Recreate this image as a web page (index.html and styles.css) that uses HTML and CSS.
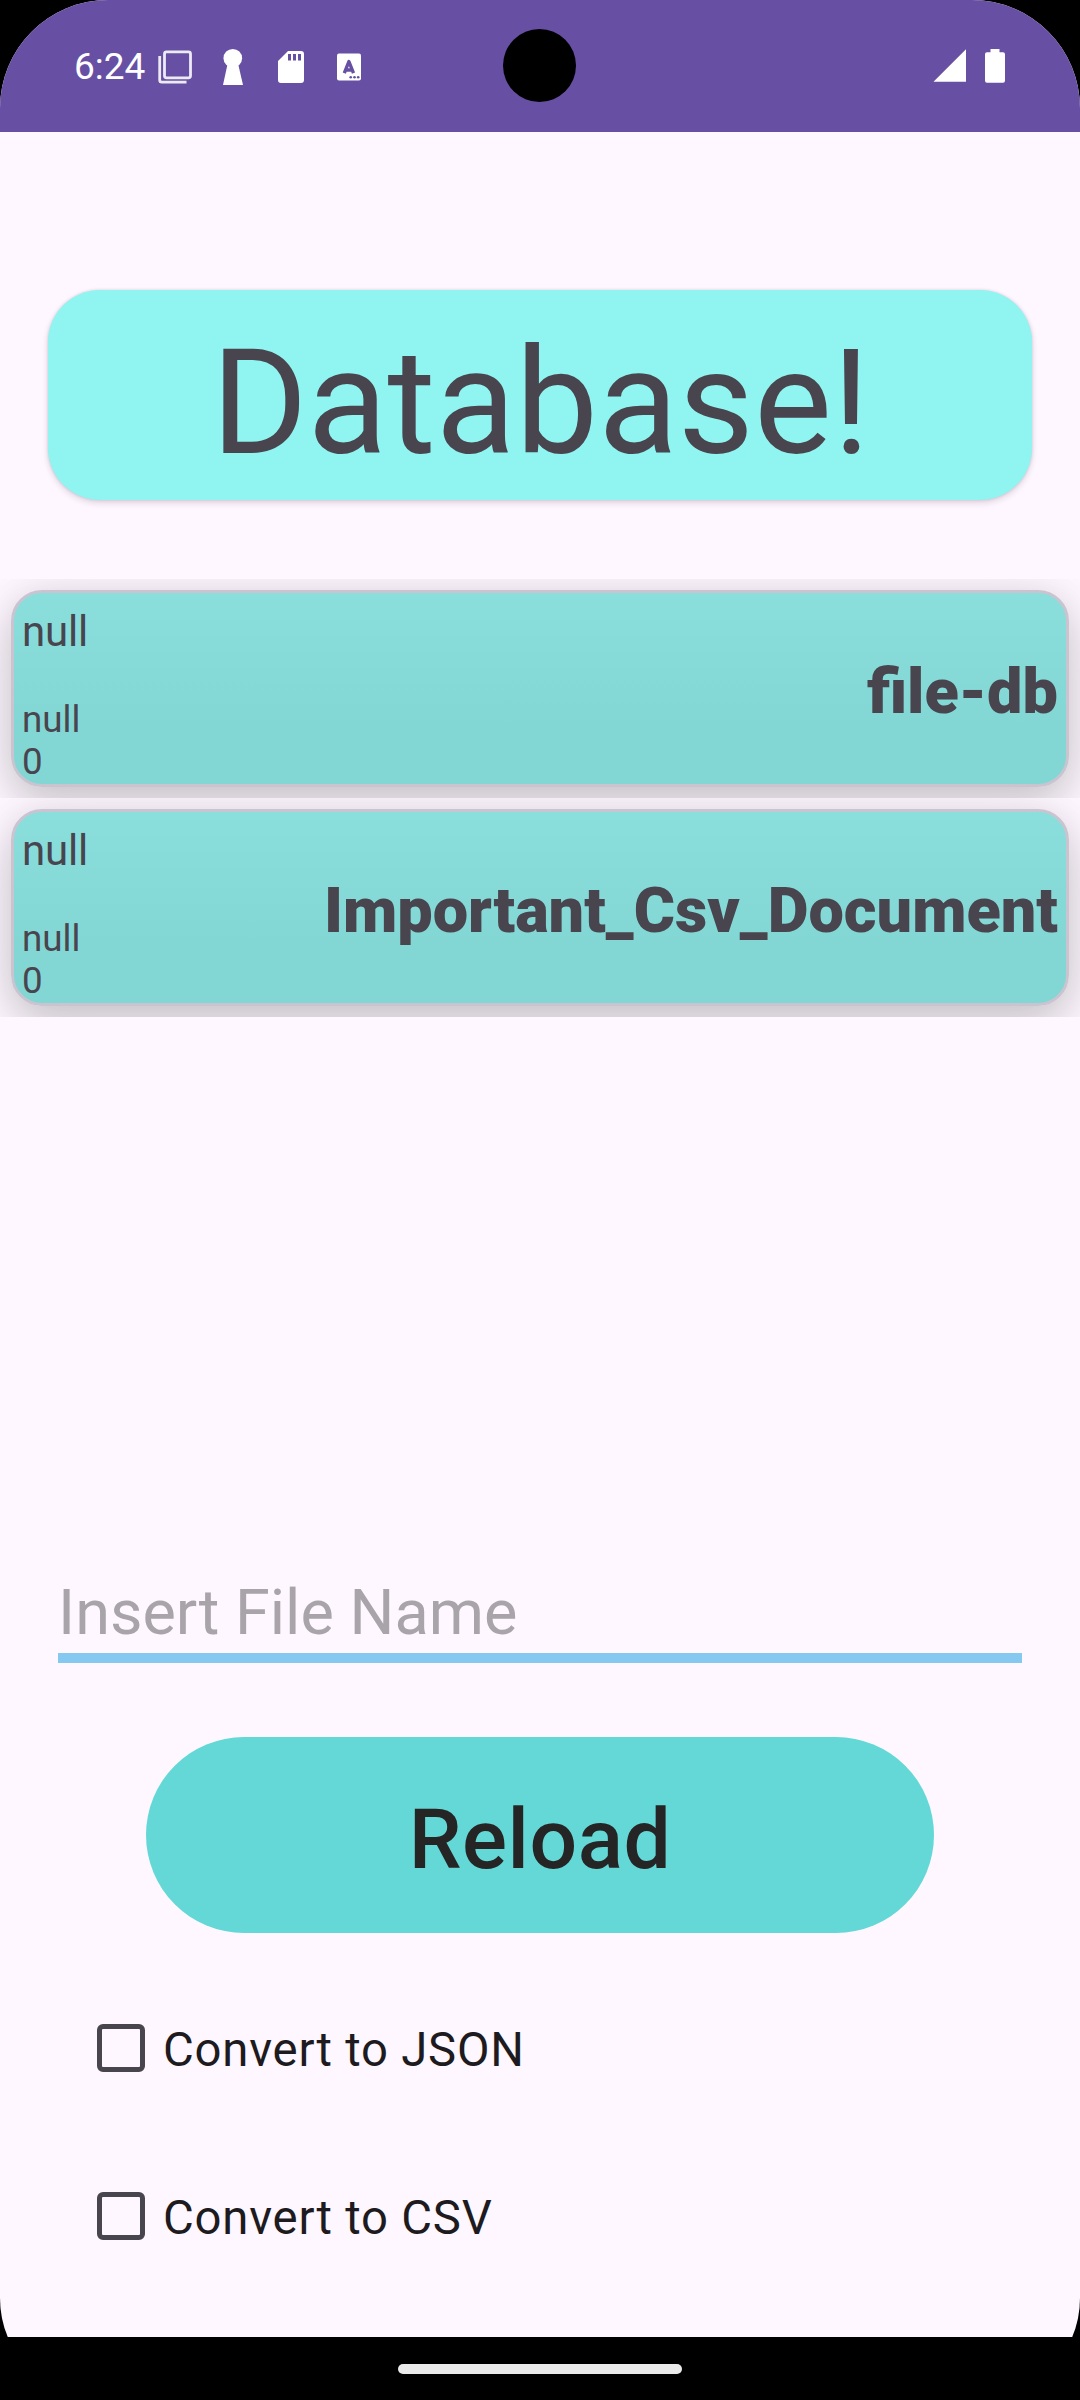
FILE: index.html
```html
<!DOCTYPE html>
<html lang="en">
<head>
<meta charset="utf-8">
<title>Database</title>
<link rel="stylesheet" href="styles.css">
</head>
<body>
<div class="screen">
  <header class="status">
    <span class="time">6:24</span>
    <svg class="notifications" width="210" height="40" viewBox="155 46 210 40">
      <g fill="none" stroke="#fff" stroke-opacity=".88">
        <rect x="164.500" y="51.800" width="26" height="26" rx="2" stroke-width="2.800"/>
        <path d="M159.700 56v24a2.200 2.200 0 0 0 2.200 2.200H186.500" stroke-width="2.800"/>
      </g>
      <g fill="#fff">
        <circle cx="232.800" cy="58.200" r="9.300"/>
        <path d="M228 62h9.700l5.300 23h-20z"/>
        <path fill-rule="evenodd" d="M288 51h13a3 3 0 0 1 3 3v26a3 3 0 0 1-3 3h-20a3 3 0 0 1-3-3V61zM288 54v6.500h3V54zM293 54v6.500h3V54zM298 54v6.500h3V54z"/>
        <rect x="337" y="53.500" width="24" height="27" rx="2"/>
      </g>
      <path d="M344.300 73.200l4.600-11.700 4.600 11.700M346 70h6" fill="none" stroke="#6750a4" stroke-width="3.400" stroke-linejoin="round"/>
      <g fill="#6750a4"><circle cx="350.700" cy="77.200" r="1.300"/><circle cx="354.500" cy="77.200" r="1.300"/><circle cx="358.200" cy="77.200" r="1.300"/></g>
    </svg>
    <svg class="system" width="76" height="40" viewBox="932 46 76 40" fill="#fff">
      <path d="M933.500 81.700L966 49.300v32.400z"/>
      <path d="M990.500 49h9v3.200h3.500a2 2 0 0 1 2 2v26.500a2 2 0 0 1-2 2h-16a2 2 0 0 1-2-2V54.200a2 2 0 0 1 2-2h3.500z"/>
    </svg>
    <div class="camera"></div>
  </header>
  <main class="content">
    <h1 class="title">Database!</h1>
    <section class="list">
      <div class="item">
        <article class="card">
          <div class="meta"><span class="first">null</span><span class="small">null</span><span class="small">0</span></div>
          <strong class="name">file-db</strong>
        </article>
      </div>
      <div class="item">
        <article class="card">
          <div class="meta"><span class="first">null</span><span class="small">null</span><span class="small">0</span></div>
          <strong class="name">Important_Csv_Document</strong>
        </article>
      </div>
    </section>
    <div class="field">Insert File Name</div>
    <button class="reload">Reload</button>
    <div class="options">
      <label class="option"><span class="box"></span><span class="label">Convert to JSON</span></label>
      <label class="option"><span class="box"></span><span class="label">Convert to CSV</span></label>
    </div>
  </main>
</div>
<footer class="nav"><div class="handle"></div></footer>
</body>
</html>
```
FILE: styles.css
```css
* { box-sizing: border-box; }
body {
  margin: 0;
  width: 1080px;
  height: 2400px;
  background: #000;
  font-family: Roboto, "Liberation Sans", sans-serif;
  color: #49454f;
  overflow: hidden;
}
.screen {
  height: 2337px;
  display: flex;
  flex-direction: column;
  background: #fef7ff;
  clip-path: inset(0 0 -63px 0 round 108px 108px 102px 102px);
}
.status {
  position: relative;
  height: 132px;
  flex: none;
  display: flex;
  align-items: center;
  padding: 0 72px 0 74px;
  background: #6750a4;
  color: #fff;
}
.time { width: 81px; font-size: 37px; line-height: 44px; padding-top: 1px; }
.system { margin-left: auto; }
.camera {
  position: absolute;
  left: 503px;
  top: 29px;
  width: 73px;
  height: 73px;
  border-radius: 50%;
  background: #000;
}
.content { flex: 1; display: flex; flex-direction: column; }
.title {
  margin: 158px 48px 0;
  height: 210px;
  padding-left: 1px;
  border-radius: 52px;
  background: #90f4f0;
  box-shadow: 0 3px 6px rgba(60, 30, 60, .16), 0 0 3px rgba(60, 30, 60, .15);
  font-size: 147px;
  font-weight: 400;
  line-height: 227px;
  text-align: center;
}
.list { margin-top: 79px; height: 990px; }
.item { height: 219px; padding: 11px; overflow: hidden; }
.card {
  height: 197px;
  display: flex;
  justify-content: space-between;
  align-items: center;
  padding: 0 8px;
  border: 3px solid #cac4d0;
  border-radius: 31px;
  background: linear-gradient(#8adfdd, #82d7d5 70%, #82d7d5);
  box-shadow: 0 22px 46px rgba(0, 0, 0, .16), 0 0 44px rgba(0, 0, 0, .1);
}
.meta { display: flex; flex-direction: column; align-self: flex-start; padding-top: 14px; }
.first { font-size: 42px; line-height: 50px; height: 92px; letter-spacing: -.2px; }
.small { font-size: 36.75px; line-height: 42px; }
.name {
  font-size: 63px;
  font-weight: 900;
  line-height: 74px;
  padding-top: 7px;
}
.field {
  margin: 5px 58px 0;
  height: 89px;
  border-bottom: 10px solid #85c9f1;
  font-size: 63px;
  line-height: 78px;
  color: #a9a4aa;
}
.reload {
  margin: 74px 146px 0;
  height: 196px;
  padding: 10px 0 0;
  border: 0;
  border-radius: 98px;
  background: #63d8d6;
  color: #252525;
  font: 500 84px/1 Roboto, "Liberation Sans", sans-serif;
  letter-spacing: .5px;
}
.options { padding: 31px 0 0 97px; }
.option {
  height: 168px;
  display: flex;
  align-items: center;
  gap: 18px;
  font-size: 47.25px;
  letter-spacing: .8px;
  color: #1d1b20;
}
.label { padding-top: 3px; }
.box { width: 48px; height: 48px; border: 5px solid #49454f; border-radius: 6px; }
.nav { height: 63px; display: flex; justify-content: center; padding-top: 27px; }
.handle { width: 284px; height: 10px; border-radius: 5px; background: #ebebeb; }
```
